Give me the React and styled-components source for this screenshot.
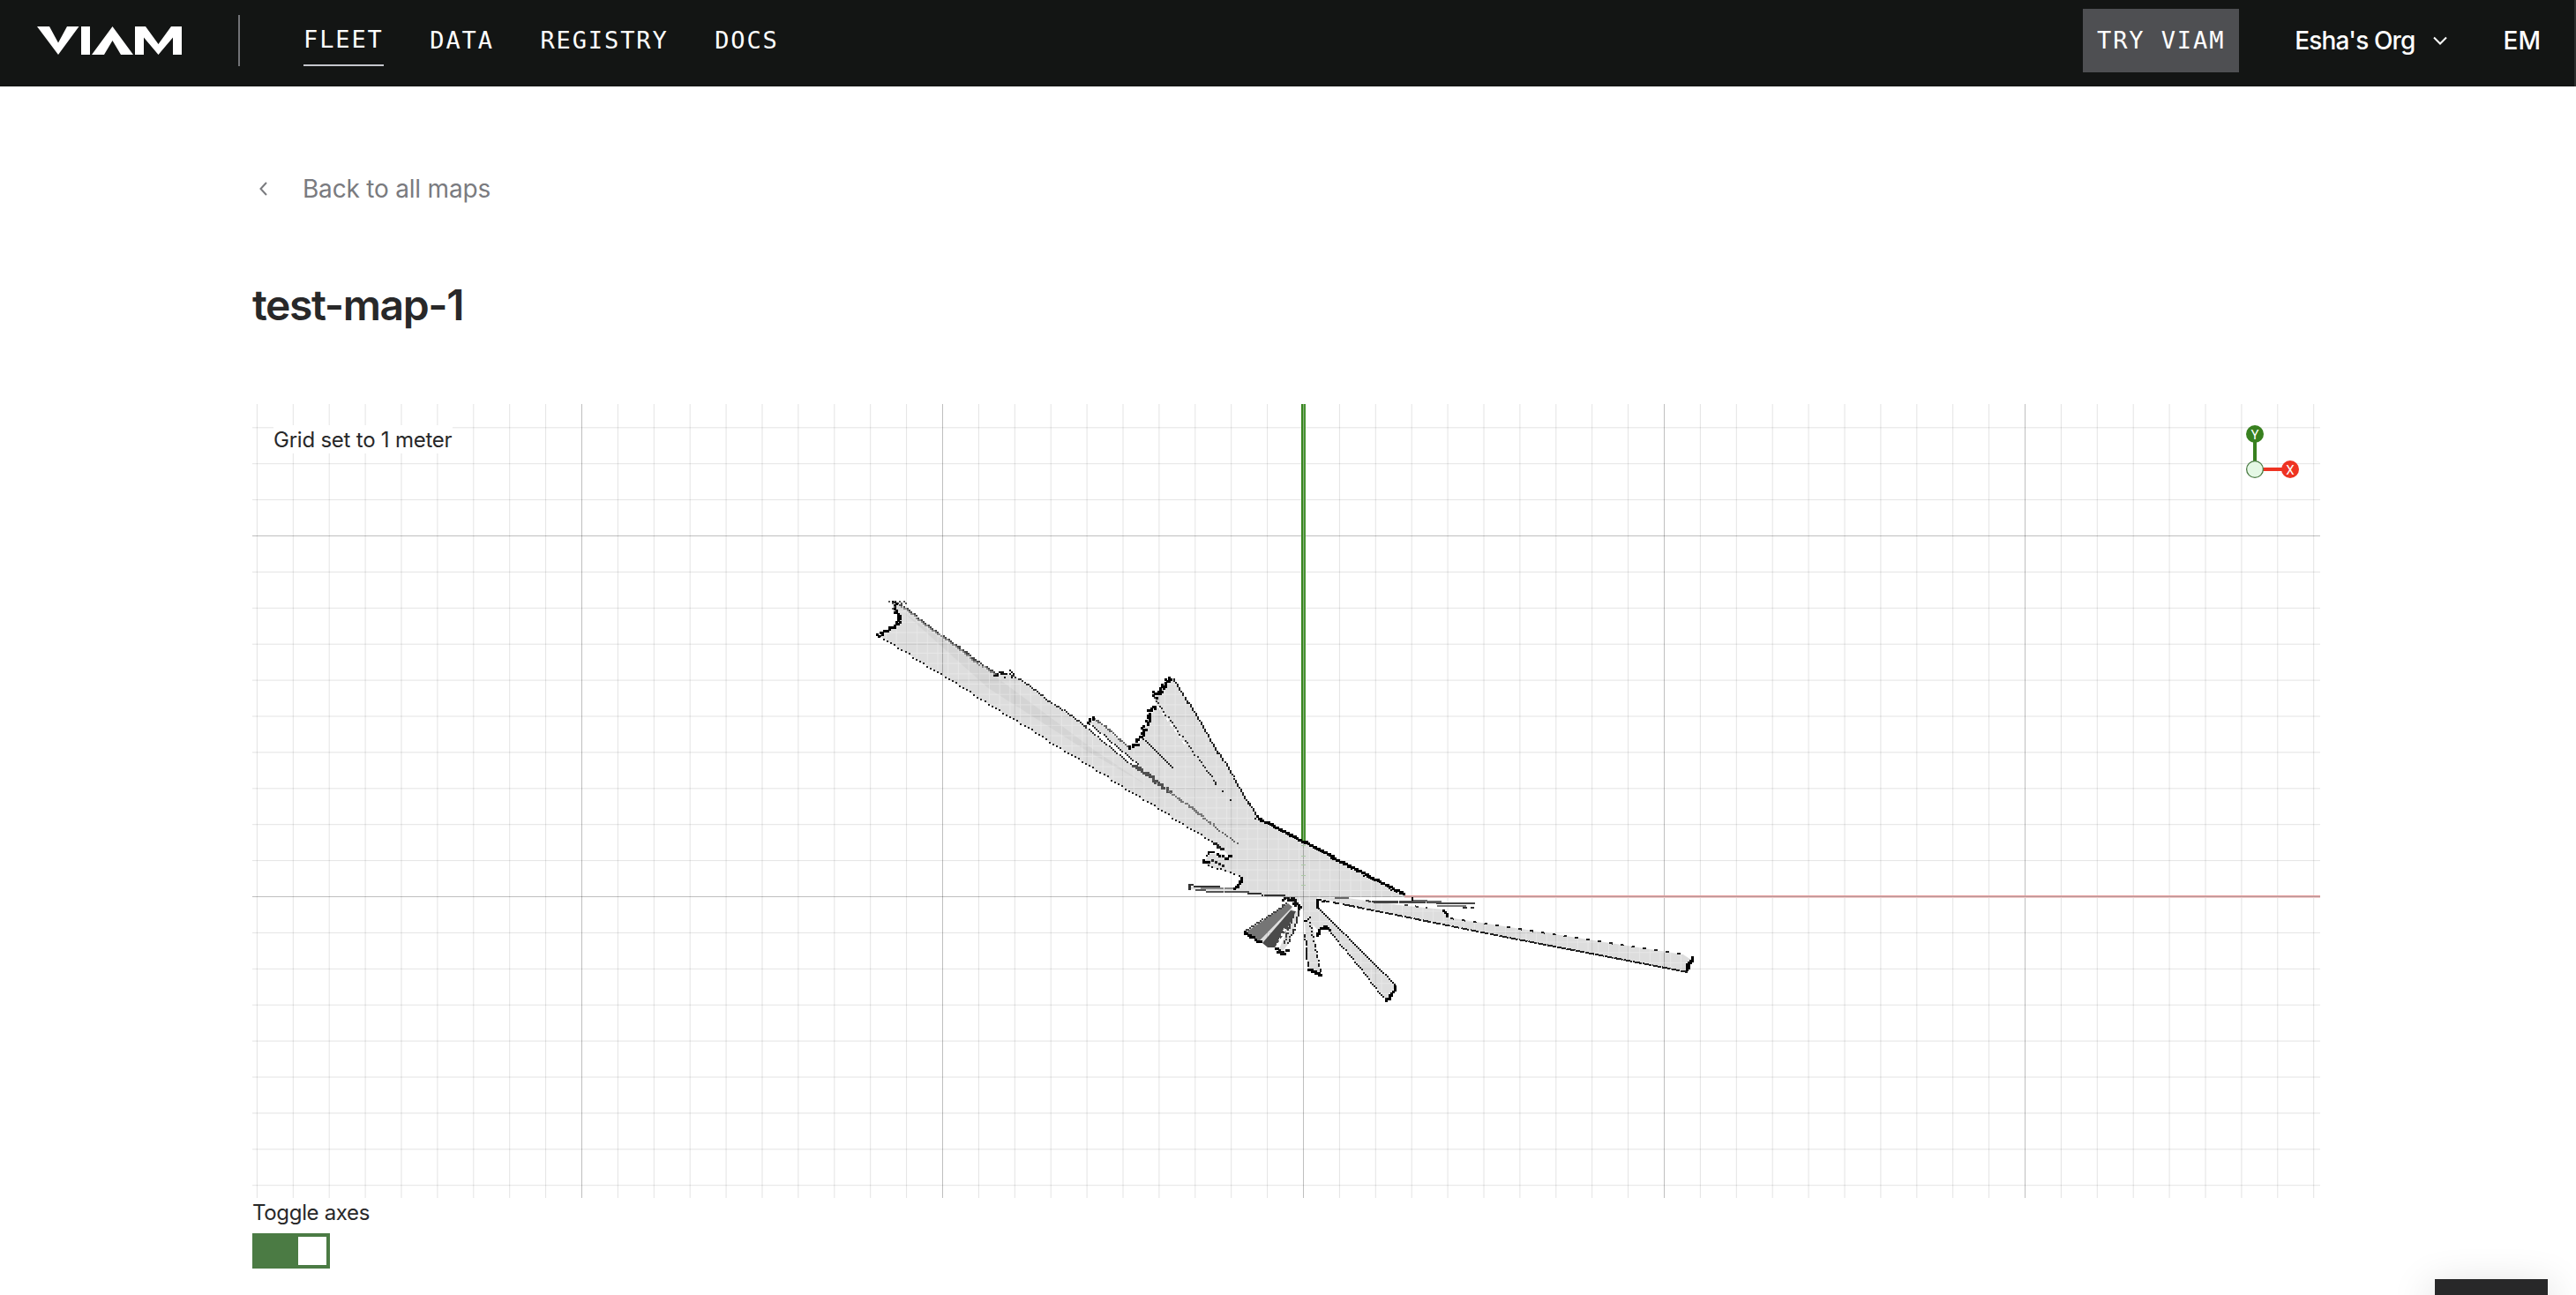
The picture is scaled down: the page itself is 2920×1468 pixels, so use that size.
import React from "react";
import styled, { createGlobalStyle, css } from "styled-components";

const SANS = `Inter, "Liberation Sans", sans-serif`;
const MONO = `"DejaVu Sans Mono", "Liberation Mono", monospace`;

const GlobalStyle = createGlobalStyle`
  *, *::before, *::after { box-sizing: border-box; }
  html { height: 100%; overflow: hidden; }
  body {
    margin: 0;
    height: 1468px;
    overflow: hidden;
    background: #fff;
    color: #282829;
    font-family: ${SANS};
  }
`;

const Header = styled.header`
  display: flex;
  align-items: flex-start;
  height: 98px;
  padding: 10px 38px 0 42px;
  background: #131514;
  border-right: 2px solid #2c2e2d;
  color: #fff;
`;

const Logo = styled.svg`
  display: block;
  width: 164px;
  height: 32px;
  margin-top: 20px;
`;

const Divider = styled.span`
  width: 2px;
  height: 58px;
  margin: 7px 72px 0 64px;
  background: #717276;
`;

const Nav = styled.nav`
  display: flex;
  gap: 52.5px;
  margin-top: 17px;
`;

const NavItem = styled.a`
  height: 48px;
  padding-top: 2px;
  font: 400 27px/34px ${MONO};
  letter-spacing: 1.9px;
  white-space: nowrap;
  ${(p) => p.$active && css`
    padding-top: 1px;
    border-bottom: 2px solid #c5c6cc;
  `}
`;

const Account = styled.div`
  display: flex;
  align-items: center;
  margin-left: auto;
  height: 72px;
`;

const TryButton = styled.button`
  width: 177px;
  height: 72px;
  border: 0;
  padding: 0;
  background: #4e4f52;
  color: #fff;
  font: 400 27px/72px ${MONO};
  letter-spacing: 1.9px;
  white-space: nowrap;
`;

const OrgMenu = styled.div`
  display: flex;
  align-items: center;
  gap: 20px;
  margin: 0 64px 0 63px;
  font-size: 28px;
  font-weight: 500;
  line-height: 72px;
  letter-spacing: -0.85px;
  white-space: nowrap;
`;

const Initials = styled.span`
  font-size: 28px;
  font-weight: 500;
  white-space: nowrap;
`;

const Main = styled.main`
  display: flex;
  flex-direction: column;
  align-items: flex-start;
  padding: 96px 290px 0 286px;
`;

const BackLink = styled.a`
  display: flex;
  align-items: center;
  gap: 40px;
  height: 40px;
  padding-left: 8px;
  color: #7a7b7f;
  font-size: 28px;
  line-height: 40px;
  letter-spacing: -0.2px;
  white-space: nowrap;
`;

const Title = styled.h1`
  margin: 80px 0 0;
  height: 64px;
  font-size: 48px;
  font-weight: 600;
  line-height: 64px;
  letter-spacing: -1.4px;
  white-space: nowrap;
`;

const MapPanel = styled.section`
  position: relative;
  width: 2344px;
  height: 900px;
  margin-top: 80px;
`;

const MapCanvas = styled.svg`
  display: block;
  width: 2344px;
  height: 900px;
`;

const GridLabel = styled.div`
  position: absolute;
  left: 24px;
  top: 24px;
  width: 203px;
  height: 32px;
  background: #fff;
  font-size: 24px;
  line-height: 33px;
  letter-spacing: -0.23px;
  white-space: nowrap;
`;

const ToggleLabel = styled.span`
  margin-top: 3px;
  font-size: 24px;
  line-height: 28px;
  letter-spacing: -0.33px;
  white-space: nowrap;
`;

const Switch = styled.div`
  display: flex;
  justify-content: flex-end;
  width: 88px;
  height: 40px;
  margin-top: 9px;
  padding: 4px;
  background: #4b7b44;
`;

const Knob = styled.span`
  width: 32px;
  height: 32px;
  background: #fff;
`;

const HelpTab = styled.div`
  position: fixed;
  right: 32px;
  bottom: 0;
  width: 128px;
  height: 18px;
  background: #282829;
  box-shadow: 0 16px 48px 4px rgba(0, 0, 0, 0.2);
`;

/* ---- occupancy map ---- */

const METER = 40.9;
const ORIGIN = { x: 1477.5, y: 1016.5 };
const CELL = 2.045;

const snap = (v, o) => Math.round(o + Math.floor((v - o) / CELL) * CELL);

function noise(seed) {
  let s = seed;
  return () => {
    s = (s * 16807) % 2147483647;
    return s / 2147483647 - 0.5;
  };
}

/* Occupied cells along a polyline: one square every `gap` px. */
function cells(points, { gap = 2, jitter = 0, size = 2, seed = 7 } = {}) {
  const rnd = noise(seed);
  let d = "";
  for (let i = 0; i < points.length - 1; i++) {
    const [x1, y1] = points[i];
    const [x2, y2] = points[i + 1];
    const n = Math.max(1, Math.round(Math.hypot(x2 - x1, y2 - y1) / gap));
    for (let k = 0; k <= n; k++) {
      const x = snap(x1 + ((x2 - x1) * k) / n + rnd() * jitter, ORIGIN.x);
      const y = snap(y1 + ((y2 - y1) * k) / n + rnd() * jitter, ORIGIN.y);
      d += `M${x} ${y}h${size}v${size}h-${size}z`;
    }
  }
  return d;
}

const FREE = [
  "1016,683 1064,718 1130,764 1148,765 1232,825 1285,868 1290,868 1236,820 1241,815 1280,848 1290,845 1296,832 1301,815 1312,801 1306,788 1316,783 1318,774 1330,769 1379,849 1425,926 1508,968 1592,1014 1592,1017 1473,1017 1473,1030 1460,1018 1445,1015 1415,1013 1385,1011 1349,1008 1350,1005 1385,1008 1400,1008 1408,994 1404,992 1369,982 1366,977 1370,968 1384,968 1394,972 1386,962 1378,957 998,722 1005,714 1016,708 1019,702 1014,692",
  "1473,1017 1493,1017 1495,1029 1582,1117 1572,1134 1507,1055 1502,1051 1495,1056 1488,1048 1497,1105 1483,1100 1480,1060 1478,1034",
  "1493,1017 1527,1018 1595,1027 1636,1031 1641,1040 1908,1082 1917,1088 1912,1101 1700,1061 1527,1026",
  "1468,1034 1473,1031 1462,1068 1455,1077 1449,1078",
  "1425,1067 1462,1029 1466,1031 1431,1069",
];

const WALLS = [
  { d: cells([[1425, 926], [1480, 955], [1592, 1014]], { gap: 2, size: 3 }), c: "#000" },
  { d: cells([[1425, 927], [1480, 956], [1592, 1015]], { gap: 3, size: 2, jitter: 2 }), c: "#000" },
  { d: cells([[1015, 681], [1014, 690], [1019, 700], [1018, 706], [1012, 711], [1004, 714], [996, 720]], { gap: 1.4, size: 3, jitter: 3.5 }), c: "#000" },
  { d: cells([[1012, 686], [1022, 686]], { gap: 1, jitter: 9, seed: 31 }), c: "#555" },
  { d: cells([[1131, 766], [1146, 764]], { gap: 0.8, jitter: 8, seed: 12 }), c: "#111" },
  { d: cells([[1328, 768], [1321, 773], [1317, 779], [1314, 787], [1308, 789], [1305, 784]], { gap: 1.3, size: 3, jitter: 4.5 }), c: "#000" },
  { d: cells([[1311, 801], [1303, 806], [1300, 818], [1295, 832], [1289, 842], [1280, 847]], { gap: 1.2, size: 3, jitter: 4.5, seed: 3 }), c: "#000" },
  { d: cells([[1241, 814], [1235, 816], [1234, 819]], { gap: 1.5, size: 3, jitter: 2 }), c: "#000" },
  { d: cells([[1408, 994], [1405, 1001], [1399, 1008]], { gap: 1.5, size: 3, jitter: 1 }), c: "#000" },
  { d: cells([[1376, 955], [1381, 959], [1386, 963]], { gap: 2, size: 3, jitter: 1 }), c: "#222" },
  { d: cells([[1395, 970], [1391, 973], [1380, 969]], { gap: 3, size: 3, jitter: 1 }), c: "#000" },
  { d: cells([[1376, 967], [1370, 967], [1369, 971]], { gap: 2, size: 2 }), c: "#000" },
  { d: cells([[1365, 974], [1365, 977], [1370, 977]], { gap: 2, size: 3 }), c: "#000" },
  { d: cells([[1375, 974], [1387, 980]], { gap: 4, size: 3 }), c: "#222" },
  { d: cells([[1348, 1004], [1348, 1008]], { gap: 2, size: 3 }), c: "#333" },
  { d: cells([[1457, 1018], [1466, 1019], [1469, 1025], [1474, 1030]], { gap: 1, size: 3, jitter: 5 }), c: "#111" },
  { d: cells([[1411, 1057], [1418, 1062], [1428, 1067]], { gap: 1.5, size: 3, jitter: 1.5 }), c: "#000" },
  { d: cells([[1448, 1074], [1449, 1079], [1453, 1080], [1458, 1075]], { gap: 1.4, size: 3, jitter: 3 }), c: "#111" },
  { d: cells([[1473, 1031], [1470, 1043], [1466, 1056], [1461, 1068]], { gap: 1.7, size: 2, jitter: 1.5 }), c: "#333" },
  { d: cells([[1467, 1036], [1461, 1052], [1456, 1068]], { gap: 1.7, size: 2, jitter: 1.5 }), c: "#444" },
  { d: cells([[1493, 1020], [1493, 1029]], { gap: 1.5, size: 3, jitter: 2 }), c: "#000" },
  { d: cells([[1493, 1020], [1500, 1021]], { gap: 2, size: 2 }), c: "#000" },
  { d: cells([[1479, 1044], [1483, 1043], [1484, 1041]], { gap: 2, size: 2 }), c: "#000" },
  { d: cells([[1493, 1060], [1496, 1053], [1501, 1050], [1507, 1054]], { gap: 1.3, size: 3, jitter: 2 }), c: "#000" },
  { d: cells([[1484, 1099], [1490, 1102], [1497, 1106]], { gap: 1.3, size: 3, jitter: 2 }), c: "#000" },
  { d: cells([[1582, 1117], [1577, 1126], [1571, 1134]], { gap: 1.3, size: 3, jitter: 2 }), c: "#000" },
  { d: cells([[1636, 1031], [1639, 1034], [1640, 1038]], { gap: 1.5, size: 3 }), c: "#000" },
  { d: cells([[1919, 1084], [1918, 1089], [1913, 1093], [1912, 1099]], { gap: 1.2, size: 3, jitter: 3 }), c: "#000" },
  { d: cells([[1602, 1017], [1602, 1020]], { gap: 2 }), c: "#000" },
];

const EDGES = [
  { d: cells([[1019, 684], [1064, 718], [1128, 763]], { gap: 2 }), c: "#444" },
  { d: cells([[1022, 688], [1126, 764]], { gap: 2.6 }), c: "#888" },
  { d: cells([[1148, 765], [1232, 824]], { gap: 2.6 }), c: "#333" },
  { d: cells([[1232, 825], [1284, 868]], { gap: 3.2 }), c: "#333" },
  { d: cells([[998, 722], [1378, 957]], { gap: 4.8 }), c: "#222" },
  { d: cells([[1236, 821], [1290, 866]], { gap: 3.2 }), c: "#333" },
  { d: cells([[1242, 815], [1279, 846]], { gap: 1.8 }), c: "#666" },
  { d: cells([[1331, 770], [1379, 849], [1425, 926]], { gap: 2.3 }), c: "#222" },
  { d: cells([[1295, 836], [1330, 871]], { gap: 2.3 }), c: "#222" },
  { d: cells([[1308, 791], [1378, 887]], { gap: 4 }), c: "#333" },
  { d: cells([[1372, 879], [1394, 907]], { gap: 12 }), c: "#222" },
  { d: cells([[1286, 868], [1327, 898]], { gap: 1, size: 3, jitter: 2.5 }), c: "#505050" },
  { d: cells([[1325, 897], [1378, 937]], { gap: 1.4, jitter: 1.5 }), c: "#777" },
  { d: cells([[1378, 937], [1402, 957]], { gap: 3.4 }), c: "#666" },
  { d: cells([[1370, 981], [1404, 992]], { gap: 5 }), c: "#111" },
  { d: cells([[1350, 1004], [1362, 1005], [1383, 1006]], { gap: 2 }), c: "#333" },
  { d: cells([[1362, 1007], [1400, 1008]], { gap: 2 }), c: "#888" },
  { d: cells([[1356, 1010], [1385, 1011], [1415, 1012]], { gap: 2 }), c: "#555" },
  { d: cells([[1415, 1014], [1447, 1015], [1460, 1017]], { gap: 2 }), c: "#333" },
  { d: cells([[1411, 1056], [1459, 1024]], { gap: 2.4 }), c: "#444" },
  { d: cells([[1479, 1060], [1482, 1095]], { gap: 2.4 }), c: "#222" },
  { d: cells([[1484, 1046], [1490, 1070], [1497, 1102]], { gap: 3.4 }), c: "#222" },
  { d: cells([[1495, 1030], [1581, 1116]], { gap: 2.9 }), c: "#111" },
  { d: cells([[1507, 1055], [1571, 1133]], { gap: 3.3 }), c: "#222" },
];

const dashes = (x1, y1, x2, y2, on, off, c = "#222", w = 2) => ({ x1, y1, x2, y2, c, w, dash: `${on} ${off}` });

const DASHES = [
  dashes(1500, 1021, 1527, 1026, 7, 4),
  dashes(1527, 1026, 1700, 1061, 9, 2),
  dashes(1700, 1061, 1913, 1102, 10, 1),
  dashes(1644, 1041, 1908, 1082, 4, 9),
  dashes(1513, 1018, 1529, 1018, 16, 0, "#666"),
  dashes(1555, 1022, 1633, 1022.5, 30, 1, "#444", 3),
  dashes(1602, 1021, 1634, 1022, 30, 0, "#666"),
  dashes(1628, 1024, 1672, 1024.4, 44, 0, "#444"),
  dashes(1629, 1027, 1662, 1027, 30, 0, "#777"),
  dashes(1658, 1029, 1671, 1029, 5, 4, "#333"),
  dashes(1548, 1021, 1562, 1023, 6, 3, "#444"),
  dashes(1592, 1026, 1618, 1029, 4, 8, "#444"),
];

const WHITE_GAPS = [
  dashes(1238, 826, 1288, 868, 10, 2, "#fff", 5),
  dashes(1313, 801, 1345, 846, 4, 4, "#fff", 2),
  dashes(1448, 1072, 1457, 1052, 3, 3, "#fff", 3),
];

const range = (a, b) => Array.from({ length: b - a + 1 }, (_, i) => a + i);

function GridLines() {
  return (
    <g>
      {range(-29, 28).map((k) => (
        <line key={`v${k}`} x1={ORIGIN.x + k * METER} x2={ORIGIN.x + k * METER} y1={458} y2={1358}
          stroke="#000" strokeOpacity={k % 10 ? 0.11 : 0.25} />
      ))}
      {range(-13, 8).map((k) => (
        <line key={`h${k}`} y1={ORIGIN.y + k * METER} y2={ORIGIN.y + k * METER} x1={286} x2={2630}
          stroke="#000" strokeOpacity={k % 10 ? 0.11 : 0.25} />
      ))}
    </g>
  );
}

function Dashes({ items }) {
  return items.map((l, i) => (
    <line key={i} x1={l.x1} y1={l.y1} x2={l.x2} y2={l.y2} stroke={l.c} strokeWidth={l.w} strokeDasharray={l.dash} />
  ));
}

function SlamMap() {
  return (
    <MapCanvas viewBox="286 458 2344 900">
      <defs>
        <pattern id="seams" width="11.7" height="11.7" patternUnits="userSpaceOnUse" x="1472" y="1009">
          <path d="M0 .5H11.7M.5 0V11.7" stroke="#fff" strokeOpacity=".3" fill="none" />
        </pattern>
      </defs>
      <GridLines />
      <rect x="1475" y="458" width="2" height="497" fill="#38861f" />
      <rect x="1477" y="458" width="1" height="497" fill="#8cb080" />
      <rect x="1478" y="458" width="2" height="497" fill="#479332" />
      <rect x="1592" y="1015" width="1038" height="1" fill="#e39a9a" />
      <rect x="1592" y="1016" width="1038" height="1" fill="#b79c9c" />
      <rect x="1592" y="1017" width="1038" height="1" fill="#f4cccc" />
      <g>
        {FREE.map((p) => <polygon key={p} points={p} fill="#000" fillOpacity=".135" />)}
        <polygon points="1024,694 1130,768 1240,850 1300,890 1230,850 1120,780" fill="#000" fillOpacity=".04" />
        {FREE.map((p) => <polygon key={p} points={p} fill="url(#seams)" />)}
        <polygon points="1412,1057 1460,1024 1465,1028 1427,1067" fill="#757575" />
        <polygon points="1431,1069 1463,1032 1469,1033 1458,1055 1445,1074 1437,1074" fill="#4a4a4a" />
      </g>
      <g shapeRendering="crispEdges">
        <Dashes items={WHITE_GAPS} />
        <Dashes items={DASHES} />
        {EDGES.map((e, i) => <path key={i} d={e.d} fill={e.c} />)}
        {WALLS.map((e, i) => <path key={i} d={e.d} fill={e.c} />)}
      </g>
      <path d="M1475 958.5h5M1475 970.5h5M1475 980.5h5M1475 992.5h5M1475 1003.5h5" stroke="#a9c9a2" />
      <g>
        <path d="M2556 532V492" stroke="#38801f" strokeWidth="4" />
        <path d="M2556 532H2596" stroke="#ee3322" strokeWidth="4" />
        <circle cx="2556" cy="492" r="10" fill="#38801f" />
        <circle cx="2596" cy="532" r="10" fill="#ee3322" />
        <circle cx="2556" cy="532" r="9.4" fill="#e5f8e5" stroke="#4b7b44" strokeWidth="1.3" />
        <g fill="#fff" fontFamily="Roboto, sans-serif" fontSize="15" textAnchor="middle">
          <text x="2556" y="497.6">Y</text>
          <text x="2596" y="537.6">X</text>
        </g>
      </g>
    </MapCanvas>
  );
}

function ViamLogo() {
  return (
    <Logo viewBox="0 0 164 32" fill="#fff">
      <path d="M0 0H14L24 18.500L34 0H47.500L24 32Z" />
      <path d="M50 0H60V32H50Z" />
      <path d="M85.500 0L109 32H95L85.500 16L76 32H62Z" />
      <path d="M111 0H123L137.500 20L152 0H164V32H154V12.500L137.500 32L121 12.500V32H111Z" />
    </Logo>
  );
}

export default function App() {
  return (
    <>
      <GlobalStyle />
      <Header>
        <ViamLogo />
        <Divider />
        <Nav>
          <NavItem $active>FLEET</NavItem>
          <NavItem>DATA</NavItem>
          <NavItem>REGISTRY</NavItem>
          <NavItem>DOCS</NavItem>
        </Nav>
        <Account>
          <TryButton>TRY VIAM</TryButton>
          <OrgMenu>
            <span>Esha's Org</span>
            <svg width="16" height="10" viewBox="0 0 16 10" fill="none" stroke="#fff" strokeWidth="2">
              <path d="M1 1.500l7 7 7-7" />
            </svg>
          </OrgMenu>
          <Initials>EM</Initials>
        </Account>
      </Header>
      <Main>
        <BackLink>
          <svg width="9" height="16" viewBox="0 0 9 16" fill="none" stroke="#7a7b7f" strokeWidth="2">
            <path d="M8 1L1.500 8L8 15" />
          </svg>
          <span>Back to all maps</span>
        </BackLink>
        <Title>test-map-1</Title>
        <MapPanel>
          <SlamMap />
          <GridLabel>Grid set to 1 meter</GridLabel>
        </MapPanel>
        <ToggleLabel>Toggle axes</ToggleLabel>
        <Switch><Knob /></Switch>
      </Main>
      <HelpTab />
    </>
  );
}
